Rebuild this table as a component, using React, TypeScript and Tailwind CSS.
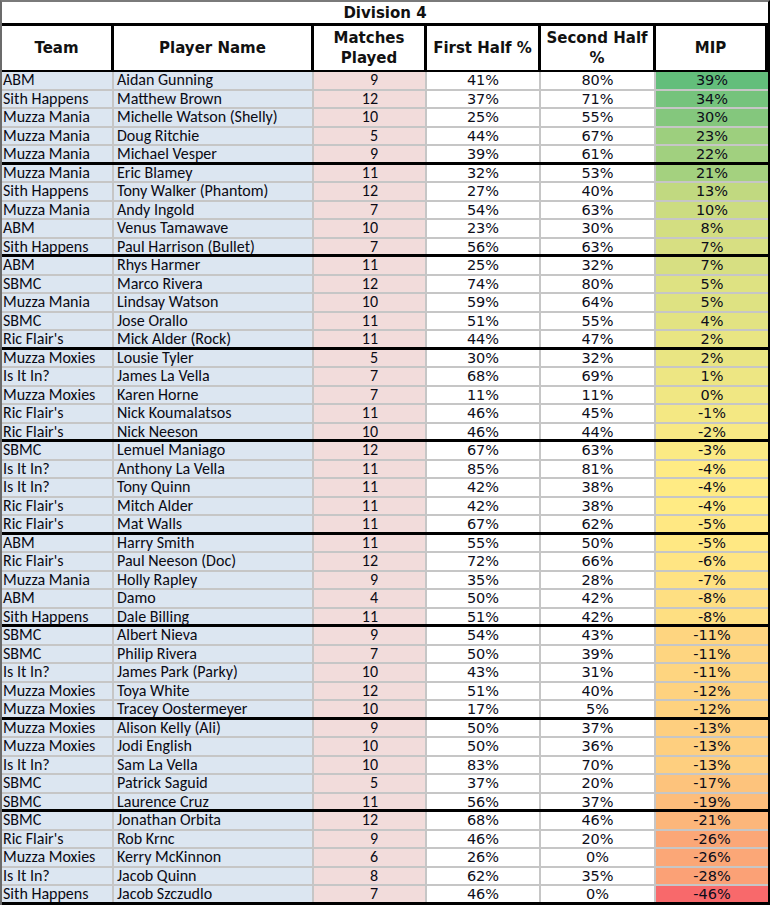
import React from "react";

type Row = [string, string, number, number, number, number];

const rows: Row[] = [
  ["ABM", "Aidan Gunning", 9, 41, 80, 39],
  ["Sith Happens", "Matthew Brown", 12, 37, 71, 34],
  ["Muzza Mania", "Michelle Watson (Shelly)", 10, 25, 55, 30],
  ["Muzza Mania", "Doug Ritchie", 5, 44, 67, 23],
  ["Muzza Mania", "Michael Vesper", 9, 39, 61, 22],
  ["Muzza Mania", "Eric Blamey", 11, 32, 53, 21],
  ["Sith Happens", "Tony Walker (Phantom)", 12, 27, 40, 13],
  ["Muzza Mania", "Andy Ingold", 7, 54, 63, 10],
  ["ABM", "Venus Tamawave", 10, 23, 30, 8],
  ["Sith Happens", "Paul Harrison (Bullet)", 7, 56, 63, 7],
  ["ABM", "Rhys Harmer", 11, 25, 32, 7],
  ["SBMC", "Marco Rivera", 12, 74, 80, 5],
  ["Muzza Mania", "Lindsay Watson", 10, 59, 64, 5],
  ["SBMC", "Jose Orallo", 11, 51, 55, 4],
  ["Ric Flair's", "Mick Alder (Rock)", 11, 44, 47, 2],
  ["Muzza Moxies", "Lousie Tyler", 5, 30, 32, 2],
  ["Is It In?", "James La Vella", 7, 68, 69, 1],
  ["Muzza Moxies", "Karen Horne", 7, 11, 11, 0],
  ["Ric Flair's", "Nick Koumalatsos", 11, 46, 45, -1],
  ["Ric Flair's", "Nick Neeson", 10, 46, 44, -2],
  ["SBMC", "Lemuel Maniago", 12, 67, 63, -3],
  ["Is It In?", "Anthony La Vella", 11, 85, 81, -4],
  ["Is It In?", "Tony Quinn", 11, 42, 38, -4],
  ["Ric Flair's", "Mitch Alder", 11, 42, 38, -4],
  ["Ric Flair's", "Mat Walls", 11, 67, 62, -5],
  ["ABM", "Harry Smith", 11, 55, 50, -5],
  ["Ric Flair's", "Paul Neeson (Doc)", 12, 72, 66, -6],
  ["Muzza Mania", "Holly Rapley", 9, 35, 28, -7],
  ["ABM", "Damo", 4, 50, 42, -8],
  ["Sith Happens", "Dale Billing", 11, 51, 42, -8],
  ["SBMC", "Albert Nieva", 9, 54, 43, -11],
  ["SBMC", "Philip Rivera", 7, 50, 39, -11],
  ["Is It In?", "James Park (Parky)", 10, 43, 31, -11],
  ["Muzza Moxies", "Toya White", 12, 51, 40, -12],
  ["Muzza Moxies", "Tracey Oostermeyer", 10, 17, 5, -12],
  ["Muzza Moxies", "Alison Kelly (Ali)", 9, 50, 37, -13],
  ["Muzza Moxies", "Jodi English", 10, 50, 36, -13],
  ["Is It In?", "Sam La Vella", 10, 83, 70, -13],
  ["SBMC", "Patrick Saguid", 5, 37, 20, -17],
  ["SBMC", "Laurence Cruz", 11, 56, 37, -19],
  ["SBMC", "Jonathan Orbita", 12, 68, 46, -21],
  ["Ric Flair's", "Rob Krnc", 9, 46, 20, -26],
  ["Muzza Moxies", "Kerry McKinnon", 6, 26, 0, -26],
  ["Is It In?", "Jacob Quinn", 8, 62, 35, -28],
  ["Sith Happens", "Jacob Szczudlo", 7, 46, 0, -46],
];

const MAX = 39;
const MID = -4;
const MIN = -46;
const GREEN = [0x63, 0xbe, 0x7b];
const YELLOW = [0xff, 0xeb, 0x84];
const RED = [0xf8, 0x69, 0x6b];

function mix(a: number[], b: number[], t: number) {
  const c = a.map((v, i) => Math.round(v + (b[i] - v) * t));
  return `rgb(${c[0]}, ${c[1]}, ${c[2]})`;
}

function mipColor(v: number) {
  if (v >= MID) return mix(YELLOW, GREEN, (v - MID) / (MAX - MID));
  return mix(RED, YELLOW, (v - MIN) / (MID - MIN));
}

const calibri = "font-['Carlito','Lato','Liberation_Sans',sans-serif] text-[16px] leading-[16px]";
const verdana = "font-['DejaVu_Sans','Verdana',sans-serif] text-[14.5px] leading-[16px]";

function DataRow({ r, last }: { r: Row; last: boolean }) {
  const rowCls = last
    ? "flex h-[18.5px] border-b-[3px] border-black"
    : "flex h-[18.5px] border-b-2 border-[#c6c6c6]";
  return (
    <div className={rowCls}>
      <div className={`w-[112px] shrink-0 bg-[#dce6f1] border-r-2 border-[#c6c6c6] pl-[1px] text-[#0a0a14] whitespace-nowrap ${calibri}`}>
        {r[0]}
      </div>
      <div className={`w-[200px] shrink-0 bg-[#dce6f1] border-r-2 border-[#c6c6c6] pl-[3px] text-[#0a0a14] whitespace-nowrap ${calibri}`}>
        {r[1]}
      </div>
      <div className={`w-[113px] shrink-0 bg-[#f2dcdb] border-r-2 border-[#c6c6c6] pr-[47px] text-right text-[#0a0a14] ${calibri}`}>
        {r[2]}
      </div>
      <div className={`w-[114px] shrink-0 bg-white border-r-2 border-[#c6c6c6] text-center text-[#0d0d1a] ${verdana}`}>
        {r[3]}%
      </div>
      <div className={`w-[115px] shrink-0 bg-white border-r-2 border-[#c6c6c6] text-center text-[#0d0d1a] ${verdana}`}>
        {r[4]}%
      </div>
      <div
        className={`w-[112px] shrink-0 text-center text-[#0d0d1a] ${verdana}`}
        style={{ backgroundColor: mipColor(r[5]) }}
      >
        {r[5]}%
      </div>
    </div>
  );
}

export default function App() {
  const hdr = "shrink-0 border-r-[3px] border-black flex items-center justify-center text-center font-bold text-[15px] leading-[20px] text-[#111] font-['DejaVu_Sans','Verdana',sans-serif]";
  return (
    <div className="w-[770px] h-[906px] bg-white">
      <div className="w-[770px] border-l-2 border-l-[#6b6b6b] border-t-2 border-t-[#7a7a7a] border-r-2 border-r-black">
        <div className="h-[24px] border-b-[3px] border-black flex items-center justify-center font-bold text-[15px] leading-[20px] text-[#111] font-['DejaVu_Sans','Verdana',sans-serif]">
          Division 4
        </div>
        <div className="flex h-[46px] border-b-2 border-black">
          <div className={`w-[112px] ${hdr}`}>Team</div>
          <div className={`w-[200px] ${hdr}`}>Player Name</div>
          <div className={`w-[113px] ${hdr}`}>
            Matches
            <br />
            Played
          </div>
          <div className={`w-[114px] ${hdr}`}>First Half %</div>
          <div className={`w-[115px] ${hdr}`}>
            Second Half
            <br />%
          </div>
          <div className={`w-[112px] ${hdr} border-r-0`}>MIP</div>
        </div>
        {rows.map((r, i) => (
          <DataRow key={i} r={r} last={i % 5 === 4} />
        ))}
      </div>
    </div>
  );
}
